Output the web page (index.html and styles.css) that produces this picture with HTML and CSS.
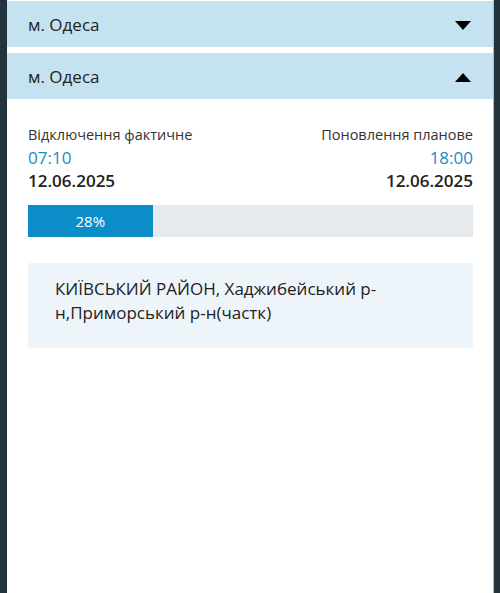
FILE: index.html
```html
<!DOCTYPE html>
<html lang="uk">
<head>
    <meta charset="UTF-8">
    <meta name="viewport" content="width=device-width, initial-scale=1.0">
    <title>Відключення</title>
    <link rel="stylesheet" href="styles.css">
</head>
<body>
    <div class="panel">
        <!-- collapsed city -->
        <div class="city-head">
            <span>м. Одеса</span>
            <svg class="arrow" width="16" height="9" viewBox="0 0 16 9"><path d="M0 0H16L8 9Z" fill="#000"/></svg>
        </div>

        <!-- expanded city -->
        <div class="city-head open">
            <span>м. Одеса</span>
            <svg class="arrow" width="16" height="9" viewBox="0 0 16 9"><path d="M0 9H16L8 0Z" fill="#000"/></svg>
        </div>
        <div class="city-body">
            <div class="times">
                <div class="time-col">
                    <div class="time-label">Відключення фактичне</div>
                    <div class="time-hour">07:10</div>
                    <div class="time-date">12.06.2025</div>
                </div>
                <div class="time-col right">
                    <div class="time-label">Поновлення планове</div>
                    <div class="time-hour">18:00</div>
                    <div class="time-date">12.06.2025</div>
                </div>
            </div>
            <div class="progress">
                <div class="progress-fill" style="width: 28%;">28%</div>
            </div>
            <div class="area">
                КИЇВСЬКИЙ РАЙОН, Хаджибейський р-н,Приморський р-н(частк)
            </div>
        </div>
    </div>
</body>
</html>
```

FILE: styles.css
```css
html, body {
    height: 100%;
}
body {
    margin: 0;
    background-color: #22353e;
    font-family: "Open Sans", "Noto Sans", sans-serif;
    color: #222;
}
.panel {
    margin: 0 6px 0 7px;
    min-height: 100%;
    background-color: #fff;
    border-right: 1px solid #bbb;
    padding-top: 1px;
    box-sizing: border-box;
}
.city-head {
    display: flex;
    justify-content: space-between;
    align-items: center;
    height: 46px;
    padding: 0 22px 0 21px;
    background-color: #c5e2f0;
    font-size: 17px;
    margin-bottom: 6px;
}
.city-head.open {
    margin-bottom: 0;
}
.city-head .arrow {
    margin-top: 2px;
}
.city-body {
    padding: 26px 20px 26px 21px;
}
.times {
    display: flex;
    justify-content: space-between;
}
.time-col.right {
    text-align: right;
}
.time-label {
    font-size: 14.5px;
    color: #333;
    line-height: 20px;
}
.time-hour {
    font-size: 17px;
    color: #1a8bc6;
    line-height: 23px;
    margin-top: 1px;
}
.time-date {
    font-size: 17px;
    font-weight: 600;
    line-height: 23px;
}
.progress {
    margin-top: 13px;
    height: 32px;
    background-color: #e7eaed;
}
.progress-fill {
    height: 100%;
    background-color: #0c8dc8;
    color: #fff;
    font-size: 15px;
    line-height: 32px;
    text-align: center;
}
.area {
    margin-top: 26px;
    background-color: #eef5fa;
    padding: 14px 80px 23px 27px;
    font-size: 17px;
    line-height: 24px;
    color: #222;
}
```
